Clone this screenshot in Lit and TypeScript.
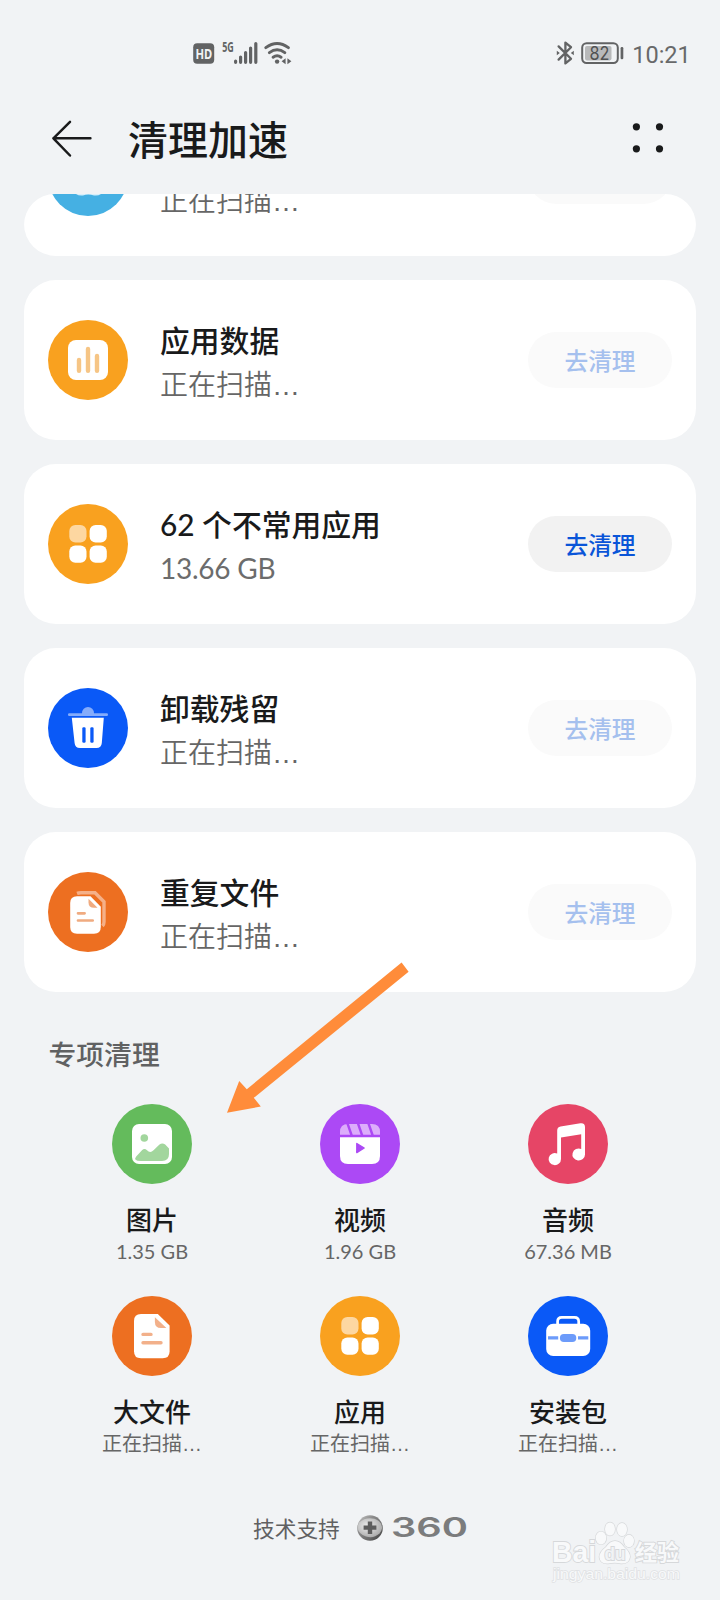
import { LitElement, html, svg, css } from "lit";
import { customElement, property } from "lit/decorators.js";

const apps = svg`
  <rect x="21.3" y="21" width="17.2" height="17.4" rx="6" fill="#fdd7a1"/>
  <rect x="41.6" y="21" width="17.2" height="17.4" rx="6" fill="#fff"/>
  <rect x="21.3" y="41.4" width="17.2" height="17.4" rx="6" fill="#fff"/>
  <rect x="41.6" y="41.4" width="17.2" height="17.4" rx="6" fill="#fff"/>`;

const glyphs: Record<string, { bg: string; art: unknown }> = {
  cloud: {
    bg: "#45b0e3",
    art: svg`<path d="M28 40H53V58Q50 60 46 59.4Q40 57.8 35 59.4Q31 60 28 58Z" fill="#d6effb"/>`,
  },
  data: {
    bg: "#f9a11f",
    art: svg`
      <rect x="20" y="20" width="40" height="40" rx="8" fill="#fff"/>
      <g fill="#f6c585">
        <rect x="28.8" y="37.7" width="4.4" height="15.2" rx="2.2"/>
        <rect x="37.8" y="26.7" width="4.4" height="26.2" rx="2.2"/>
        <rect x="46.8" y="33.7" width="4.4" height="19.2" rx="2.2"/>
      </g>`,
  },
  apps: { bg: "#f9a11f", art: apps },
  trash: {
    bg: "#0a59f7",
    art: svg`
      <path d="M34 25.2a6 6.2 0 0 1 12 0H58.6a1.4 1.4 0 0 1 0 2.9H21.4a1.4 1.4 0 0 1 0-2.9Z" fill="#85acfb"/>
      <path d="M23.8 29.8H55.8L53.8 55Q53.4 60 48.4 60H32Q27 60 26.6 55Z" fill="#fff"/>
      <rect x="34.3" y="39.3" width="3.3" height="15.4" rx="1.2" fill="#0a59f7"/>
      <rect x="42.3" y="39.3" width="3.3" height="15.4" rx="1.2" fill="#0a59f7"/>`,
  },
  copies: {
    bg: "#ed6f21",
    art: svg`
      <path d="M29 21.4Q30.5 20.8 33 20.8H47L56 29.8V50Q56 52.5 54.5 54" fill="none" stroke="#f5b088" stroke-width="3.4"/>
      <path d="M29 24.3H42.5L52.8 34.8V55Q52.8 61.8 46 61.8H29Q22.2 61.8 22.2 55V31Q22.2 24.3 29 24.3Z" fill="#fff"/>
      <path d="M40.5 26.8L49.5 35.8H46Q40.5 35.8 40.5 30.5Z" fill="#f0ab80"/>
      <path d="M30 41.3H36.6M30 48.5H44.7" stroke="#f0ab80" stroke-width="2.7" stroke-linecap="round"/>`,
  },
  picture: {
    bg: "#64bb5c",
    art: svg`
      <rect x="20" y="20" width="40" height="40" rx="7" fill="#fff"/>
      <circle cx="32.3" cy="34" r="3.8" fill="#a2d69d"/>
      <path d="M24.2 52.6L30 46.2Q32.4 43.6 35 46.2Q38.2 49.6 41.5 46.2L47.5 40.6Q50.3 38.2 53.2 40.6L57 44.6V50Q57 57 50 57H29Q20.5 57 24.2 52.6Z" fill="#a2d69d"/>`,
  },
  video: {
    bg: "#ac49f5",
    art: svg`
      <path d="M20 30.8V28Q20 20 28 20H52Q60 20 60 28V30.8Z" fill="#dcadfb"/>
      <path d="M27 18L32 32.5M37.5 18L42.5 32.5M48 18L53 32.5" stroke="#ac49f5" stroke-width="2.4"/>
      <path d="M20 33.3H60V52Q60 60 52 60H28Q20 60 20 52Z" fill="#fff"/>
      <path d="M36.8 39.5L44.2 44L36.8 48.6Z" fill="#ac49f5" stroke="#ac49f5" stroke-width="1.4" stroke-linejoin="round"/>`,
  },
  music: {
    bg: "#e64566",
    art: svg`
      <path d="M29.2 26.5Q29.2 23 32.6 22.4L52.4 19.2Q57 18.6 57 23V50.5A6.3 6 0 1 1 53.2 45V30.2L33 33.4V55A6.2 6 0 1 1 29.2 49.6Z" fill="#fff"/>`,
  },
  file: {
    bg: "#ed6f21",
    art: svg`
      <path d="M29 18H45.8L57.6 29.6V55.3Q57.6 62.3 50.6 62.3H29Q22 62.3 22 55.3V25Q22 18 29 18Z" fill="#fff"/>
      <path d="M42.9 21.2L54.4 32H49Q42.9 32 42.9 26Z" fill="#f2b08a"/>
      <path d="M31 38.4H39M31 46.8H49" stroke="#f2b08a" stroke-width="3.4" stroke-linecap="round"/>`,
  },
  package: {
    bg: "#0a59f7",
    art: svg`
      <path d="M29.6 29V25.5Q29.6 21.3 33.8 21.3H46.5Q50.7 21.3 50.7 25.5V29" fill="none" stroke="#fff" stroke-width="2.7"/>
      <rect x="18.2" y="27.7" width="44" height="32.4" rx="7" fill="#fff"/>
      <path d="M20 41.9H30.2M50 41.9H60.3" stroke="#6c9bfa" stroke-width="3.4"/>
      <rect x="31.9" y="38" width="16.4" height="8" rx="4" fill="#6c9bfa"/>`,
  },
};

@customElement("round-icon")
class RoundIcon extends LitElement {
  @property() name = "apps";
  static styles = css`
    :host { display: block; width: 80px; height: 80px; flex: none; }
    svg { display: block; }
  `;
  render() {
    const g = glyphs[this.name];
    return html`<svg width="80" height="80" viewBox="0 0 80 80">
      <circle cx="40" cy="40" r="40" fill=${g.bg}></circle>${g.art}
    </svg>`;
  }
}

const SCANNING = "正在扫描…";

interface Row { icon: string; title: string; sub: string; ready?: boolean }

const rows: Row[] = [
  { icon: "cloud", title: "", sub: SCANNING },
  { icon: "data", title: "应用数据", sub: SCANNING },
  { icon: "apps", title: "62 个不常用应用", sub: "13.66 GB", ready: true },
  { icon: "trash", title: "卸载残留", sub: SCANNING },
  { icon: "copies", title: "重复文件", sub: SCANNING },
];

const tiles: Row[] = [
  { icon: "picture", title: "图片", sub: "1.35 GB" },
  { icon: "video", title: "视频", sub: "1.96 GB" },
  { icon: "music", title: "音频", sub: "67.36 MB" },
  { icon: "file", title: "大文件", sub: SCANNING },
  { icon: "apps", title: "应用", sub: SCANNING },
  { icon: "package", title: "安装包", sub: SCANNING },
];

const subText = (t: string) =>
  t.endsWith("…") ? html`${t.slice(0, -1)}<span class="dots">…</span>` : html`<span class="latin">${t}</span>`;

@customElement("app-root")
class AppRoot extends LitElement {
  static styles = css`
    :host {
      display: block;
      position: relative;
      width: 720px;
      height: 1600px;
      overflow: hidden;
      background: #f1f3f5;
      color: #191a1b;
      font-family: Lato, "Noto Sans CJK SC", sans-serif;
    }
    * { box-sizing: border-box; }
    svg { display: block; flex: none; overflow: visible; }
    .status {
      display: flex;
      justify-content: space-between;
      height: 84px;
      padding: 40px 28px 0 193px;
    }
    .group { display: flex; height: 28px; }
    .group.right { gap: 7px; }
    .bar {
      display: flex;
      align-items: center;
      height: 110px;
      padding: 0 56px 0 50px;
    }
    .bar h1 {
      margin: 2px auto 0 35px;
      font-size: 40px;
      font-weight: 500;
      line-height: 60px;
    }
    .viewport {
      margin: 0 24px;
      height: 798px;
      overflow: hidden;
      border-radius: 31px 31px 0 0;
    }
    .list {
      display: flex;
      flex-direction: column;
      gap: 24px;
      margin-top: -98px;
    }
    .card {
      display: flex;
      align-items: center;
      height: 160px;
      padding: 0 24px;
      border-radius: 32px;
      background: #fff;
    }
    .text { flex: 1; margin-left: 32px; padding-top: 3px; }
    .title { height: 44px; font-size: 29.8px; font-weight: 500; line-height: 44px; }
    .sub { height: 42px; font-size: 28px; font-weight: 350; line-height: 42px; color: #666; }
    .sub .latin { font-weight: 400; letter-spacing: -0.25px; color: #6c6c6c; }
    .dots { font-family: "Liberation Sans"; }
    .clean {
      width: 144px;
      height: 56px;
      border: 0;
      padding: 0;
      border-radius: 28px;
      background: #fafafa;
      color: #a5c0ee;
      font: 500 23.7px/56px "Noto Sans CJK SC", sans-serif;
      text-align: center;
    }
    .clean.ready { background: #f2f2f2; color: #0a55d8; }
    h2 {
      margin: 42px 0 0 48.5px;
      font-size: 27.8px;
      font-weight: 450;
      line-height: 42px;
      color: #606162;
    }
    .tiles {
      display: grid;
      grid-template-columns: repeat(3, 208px);
      grid-auto-rows: 192px;
      margin: 28px 48px 0;
    }
    .tile { display: flex; flex-direction: column; align-items: center; }
    .tile .name { margin-top: 17px; font-size: 26px; font-weight: 500; line-height: 38px; }
    .tile .size { margin-top: -2px; font-size: 20px; line-height: 28px; color: #666; }
    .foot {
      display: flex;
      align-items: center;
      height: 40px;
      margin-top: 20px;
      padding-left: 253px;
      font-size: 21.7px;
      color: #5f6061;
    }
    .foot span { padding-bottom: 2px; }
    .foot .ball { margin: 0 9px 0 17px; }
    .pointer { position: absolute; left: 220px; top: 955px; }
    .mark { position: absolute; left: 545px; top: 1515px; }
  `;

  render() {
    return html`
      <div class="status">
        <div class="group">
          <svg width="100" height="28" viewBox="193 40 100 28">
            <rect x="193.2" y="43.2" width="21" height="20.6" rx="4" fill="#626364"/>
            <text x="195.4" y="58.9" font-family="Noto Sans" font-weight="700" font-size="14.5" textLength="16.8" lengthAdjust="spacingAndGlyphs" fill="#f1f3f5">HD</text>
            <text x="222.2" y="52" font-family="Noto Sans" font-weight="700" font-size="13.4" textLength="11.6" lengthAdjust="spacingAndGlyphs" fill="#626364">5G</text>
            <path d="M235.6 61.2V62.3M240.6 57V62.3M245.6 52.5V62.3M250.6 48V62.3M255.8 43.6V62.3" stroke="#626364" stroke-width="3.2" stroke-linecap="round"/>
            <path d="M265.8 47.6Q277.1 39.4 288.4 47.6M269.4 52.6Q277.1 47 284.8 52.6M273.1 57.2Q277.1 54.4 281.1 57.2" fill="none" stroke="#626364" stroke-width="3" stroke-linecap="round"/>
            <circle cx="277.1" cy="61.6" r="2.2" fill="#626364"/>
            <path d="M281.6 61.3L285.6 58.2V64.2ZM291.4 61.3L287.4 58.2V64.2Z" fill="#626364"/>
          </svg>
        </div>
        <div class="group right">
          <svg width="70" height="28" viewBox="555 40 70 28">
            <path d="M558.6 46.4L571 58.8L565.4 63.4V42.6L571 47.2L558.6 59.6" fill="none" stroke="#626364" stroke-width="2.3" stroke-linejoin="round" stroke-linecap="round"/>
            <path d="M556.8 50.8L559.8 53L556.8 55.2ZM573.8 50.8L570.8 53L573.8 55.2Z" fill="#626364"/>
            <rect x="582.2" y="43.2" width="35.6" height="19.8" rx="4.4" fill="none" stroke="#626364" stroke-width="2"/>
            <rect x="585" y="46" width="26.5" height="14.4" rx="1.8" fill="#b8b9ba"/>
            <rect x="620.6" y="47" width="2.7" height="12.2" rx="1.2" fill="#626364"/>
            <text x="589.4" y="59.8" font-family="Inter" font-size="18" textLength="20" lengthAdjust="spacingAndGlyphs" fill="#505152">82</text>
          </svg>
          <svg width="60" height="28" viewBox="632 40 60 28">
            <text x="632.2" y="63.2" font-family="Roboto" font-size="24.4" textLength="58.6" lengthAdjust="spacingAndGlyphs" fill="#68696a">10:21</text>
          </svg>
        </div>
      </div>
      <div class="bar">
        <svg width="43" height="40" viewBox="50 118.5 43 40" fill="none" stroke="#191a1b" stroke-width="2.5" stroke-linecap="round" stroke-linejoin="round">
          <path d="M70 121.3L53.4 137.8L70 155M53.4 137.8H90.4"/>
        </svg>
        <h1>清理加速</h1>
        <svg width="32" height="32" viewBox="632 122.6 32 32" fill="#191a1b">
          <circle cx="636.4" cy="126.4" r="3.6"/><circle cx="659.5" cy="126.4" r="3.6"/>
          <circle cx="636.4" cy="148.4" r="3.6"/><circle cx="659.5" cy="148.4" r="3.6"/>
        </svg>
      </div>
      <div class="viewport">
        <div class="list">
          ${rows.map((r) => html`
            <div class="card">
              <round-icon name=${r.icon}></round-icon>
              <div class="text">
                <div class="title">${r.title}</div>
                <div class="sub">${subText(r.sub)}</div>
              </div>
              <button class="clean ${r.ready ? "ready" : ""}">去清理</button>
            </div>`)}
        </div>
      </div>
      <h2>专项清理</h2>
      <div class="tiles">
        ${tiles.map((t) => html`
          <div class="tile">
            <round-icon name=${t.icon}></round-icon>
            <div class="name">${t.title}</div>
            <div class="size">${subText(t.sub)}</div>
          </div>`)}
      </div>
      <div class="foot">
        <span>技术支持</span>
        <svg class="ball" width="26" height="28" viewBox="0 0 26 28">
          <defs>
            <linearGradient id="rim" x1="0" y1="0" x2="1" y2="1">
              <stop offset="0" stop-color="#c8c8c8"/><stop offset=".35" stop-color="#8a8a8a"/>
              <stop offset=".7" stop-color="#6a6a6a"/><stop offset="1" stop-color="#333"/>
            </linearGradient>
            <radialGradient id="core" cx=".4" cy=".4" r=".65">
              <stop offset="0" stop-color="#ededed"/><stop offset="1" stop-color="#a9a9a9"/>
            </radialGradient>
          </defs>
          <circle cx="13" cy="14" r="12.8" fill="url(#rim)"/>
          <path d="M2 8.5Q9 2.5 17.5 4.8Q24.5 7 25.2 14Q24.5 17 22.5 19.6Q16.5 25 9 22.5Q1.5 20 .6 14Q.8 11 2 8.5Z" fill="url(#core)"/>
          <path d="M10.8 7.4H15.2V11.4H19.4V15.8H15.2V20H10.8V15.8H6.6V11.4H10.8Z" fill="#5d5d5d"/>
        </svg>
        <svg width="76" height="28" viewBox="0 0 76 28">
          <text x="-1" y="23.4" font-family="Inter" font-weight="600" font-size="26.4" textLength="77" lengthAdjust="spacingAndGlyphs" fill="#7b7c7d">360</text>
        </svg>
      </div>
      <svg class="pointer" width="200" height="170" viewBox="220 955 200 170">
        <path d="M227 1112.8L239.2 1081L246.8 1089.2L401.6 962.4L408.6 971.8L253.8 1097.8L260.8 1106.6Z" fill="#ff8c3a"/>
      </svg>
      <svg class="mark" width="150" height="75" viewBox="545 1515 150 75" fill="#f8f9fa" stroke="#d6d8da" stroke-width="1.8" paint-order="stroke">
        <text x="552" y="1562" font-family="Liberation Sans" font-weight="700" font-size="29" textLength="44" lengthAdjust="spacingAndGlyphs">Bai</text>
        <g stroke-width="1.4">
          <ellipse cx="601" cy="1538" rx="5.3" ry="6.4"/>
          <ellipse cx="610" cy="1529" rx="5" ry="6.6"/>
          <ellipse cx="622" cy="1529.5" rx="5" ry="6.6"/>
          <ellipse cx="629" cy="1541" rx="5" ry="6.2"/>
          <path d="M615 1541Q620 1541 624 1547Q630 1552 630 1557Q629 1564 621 1563.6Q615 1562 608 1563.6Q600 1564 599.4 1557Q599.4 1552 606 1547Q610 1541 615 1541Z"/>
        </g>
        <text x="604.5" y="1560" font-family="Liberation Sans" font-weight="700" font-size="18" fill="#f1f3f5" textLength="21" lengthAdjust="spacingAndGlyphs">du</text>
        <text x="635" y="1560" font-family="Noto Sans CJK SC" font-weight="700" font-size="22" textLength="44" lengthAdjust="spacingAndGlyphs">经验</text>
        <text x="553" y="1579" font-family="Liberation Sans" font-size="15" stroke="#dfe1e3" stroke-width="1.4" textLength="127" lengthAdjust="spacingAndGlyphs">jingyan.baidu.com</text>
      </svg>
    `;
  }
}
